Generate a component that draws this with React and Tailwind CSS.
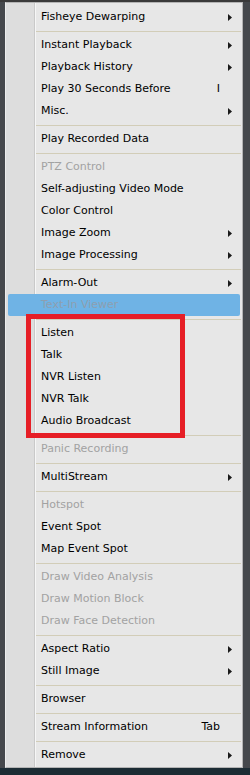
import React from "react";

const items = [
  { label: "Fisheye Dewarping", sub: true },
  { sep: true },
  { label: "Instant Playback", sub: true },
  { label: "Playback History", sub: true },
  { label: "Play 30 Seconds Before", key: "I" },
  { label: "Misc.", sub: true },
  { sep: true },
  { label: "Play Recorded Data" },
  { sep: true },
  { label: "PTZ Control", off: true },
  { label: "Self-adjusting Video Mode" },
  { label: "Color Control" },
  { label: "Image Zoom", sub: true },
  { label: "Image Processing", sub: true },
  { sep: true },
  { label: "Alarm-Out", sub: true },
  { label: "Text-In Viewer", off: true, active: true },
  { sep: true },
  { label: "Listen" },
  { label: "Talk" },
  { label: "NVR Listen" },
  { label: "NVR Talk" },
  { label: "Audio Broadcast" },
  { sep: true },
  { label: "Panic Recording", off: true },
  { sep: true },
  { label: "MultiStream", sub: true },
  { sep: true },
  { label: "Hotspot", off: true },
  { label: "Event Spot" },
  { label: "Map Event Spot" },
  { sep: true },
  { label: "Draw Video Analysis", off: true },
  { label: "Draw Motion Block", off: true },
  { label: "Draw Face Detection", off: true },
  { sep: true },
  { label: "Aspect Ratio", sub: true },
  { label: "Still Image", sub: true },
  { sep: true },
  { label: "Browser" },
  { sep: true },
  { label: "Stream Information", key: "Tab" },
  { sep: true },
  { label: "Remove", sub: true },
];

function Arrow() {
  return (
    <svg width="4" height="7" viewBox="0 0 4 7" className="block">
      <path d="M0 0 L4 3.5 L0 7 Z" fill="#1a1a1a" />
    </svg>
  );
}

function MenuRow({ item }) {
  if (item.sep) {
    return (
      <div className="h-[6px] flex items-center ml-[30px] mr-[1px]">
        <div className="h-px w-full bg-[#d2cdb8]" />
      </div>
    );
  }
  return (
    <div
      className={`h-[22px] mx-[2px] pl-[33px] pr-[8px] flex items-center ${
        item.active ? "bg-[#6fb3e5] rounded-[2px]" : ""
      }`}
    >
      <span
        className={`flex-1 whitespace-nowrap ${
          item.active ? "text-[#8d9fb0]" : item.off ? "text-[#a2a2a2]" : "text-black"
        }`}
      >
        {item.label}
      </span>
      {item.key && <span className="mr-[8px] text-black">{item.key}</span>}
      <span className="w-[4px] flex items-center">{item.sub && <Arrow />}</span>
    </div>
  );
}

export default function App() {
  return (
    <div
      className="relative w-[250px] h-[775px] flex flex-col bg-[#45484c] text-[11px] leading-[22px]"
      style={{ fontFamily: '"DejaVu Sans", Verdana, sans-serif' }}
    >
      <div className="h-[2px] bg-[#3a3a3a]" />
      <div className="ml-[5px] w-[238px] border border-[#b4b4b4] border-l-[#ececec] bg-[linear-gradient(to_right,#dddddd_28px,#c9c9c9_28px,#c9c9c9_29px,#f6f6f6_29px,#f6f6f6_30px,#e7e7e7_30px)] pt-[3px] pb-px">
        {items.map((item, i) => (
          <MenuRow key={i} item={item} />
        ))}
      </div>
      <div className="flex-1 bg-[#1c2c34]" />
      <div className="absolute left-[26px] top-[314px] w-[159px] h-[124px] border-[5px] border-[#e61e26]" />
    </div>
  );
}
